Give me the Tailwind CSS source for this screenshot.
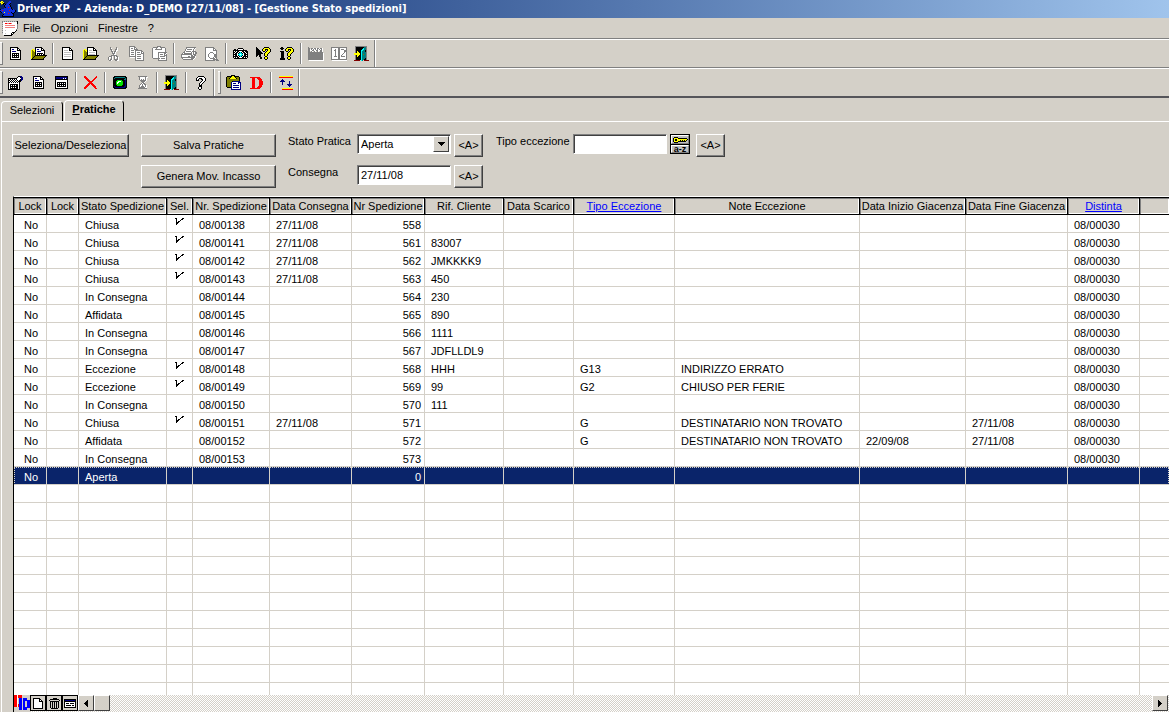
<!DOCTYPE html>
<html lang="it">
<head>
<meta charset="utf-8">
<title>Driver XP</title>
<script src="https://cdn.jsdelivr.net/npm/@tailwindcss/browser@4"></script>
</head>
<body class="flex h-screen flex-col overflow-hidden bg-[#d4d0c8] font-['Liberation_Sans',sans-serif] text-[11px] leading-4 text-black">

<header class="flex h-[18px] shrink-0 items-center gap-px bg-linear-to-r from-[#0a246a] to-[#a0c4ec] text-white">
  <i data-icon="wizard" class="block"></i>
  <h1 class="font-['DejaVu_Sans_Condensed','DejaVu_Sans',sans-serif] text-[11px] font-bold whitespace-pre">Driver XP  - Azienda: D_DEMO [27/11/08] - [Gestione Stato spedizioni]</h1>
</header>

<nav class="flex h-[21px] shrink-0 items-center border-b border-[#808080] pl-[2px]">
  <i data-icon="form" class="block"></i>
  <button class="ml-[5px]">File</button>
  <button class="ml-[10px]">Opzioni</button>
  <button class="ml-[10px]">Finestre</button>
  <button class="ml-[10px]">?</button>
</nav>

<div id="bar1" role="toolbar" class="flex h-[29px] shrink-0 items-stretch border-t border-b border-t-white border-b-[#808080]"></div>
<div id="bar2" role="toolbar" class="flex h-[30px] shrink-0 items-stretch border-t border-b-2 border-t-white border-b-[#55555a]"></div>

<div role="tablist" class="flex h-[23px] shrink-0 items-end pl-px">
  <button role="tab" class="h-[20px] w-[62px] rounded-t-[4px] border-t border-r border-l border-t-white border-r-black border-l-white pb-1">Selezioni</button>
  <button role="tab" aria-selected="true" class="mb-[-1px] ml-px h-[22px] w-[60px] rounded-t-[4px] border-t border-r border-l border-t-white border-r-black border-l-white bg-[#d4d0c8] pb-[6px] font-bold"><u>P</u>ratiche</button>
</div>

<main class="ml-px flex min-h-0 flex-1 flex-col border-t border-l border-white">
  <form class="flex shrink-0 items-start pt-3 pb-2 pl-[10px]">
    <button type="button" class="h-[23px] w-[117px] border border-t-white border-r-[#404040] border-b-[#404040] border-l-white pb-[2px] shadow-[inset_-1px_-1px_#808080]">Seleziona/Deseleziona</button>
    <div class="ml-3 flex w-[135px] flex-col gap-2">
      <button type="button" class="h-[23px] border border-t-white border-r-[#404040] border-b-[#404040] border-l-white pb-[2px] shadow-[inset_-1px_-1px_#808080]">Salva Pratiche</button>
      <button type="button" class="h-[23px] border border-t-white border-r-[#404040] border-b-[#404040] border-l-white pb-[2px] shadow-[inset_-1px_-1px_#808080]">Genera Mov. Incasso</button>
    </div>
    <div class="ml-3 grid grid-cols-[69px_94px_29px] items-start gap-y-2">
      <label for="stato" class="leading-[14px]">Stato Pratica</label>
      <div class="relative h-[20px]">
        <select id="stato" class="h-full w-full appearance-none border border-t-[#808080] border-r-white border-b-white border-l-[#808080] bg-white pl-[3px] shadow-[inset_1px_1px_#404040]"><option>Aperta</option></select>
        <span class="pointer-events-none absolute top-[2px] right-[2px] flex h-4 w-4 items-center justify-center border border-t-white border-r-[#404040] border-b-[#404040] border-l-white bg-[#d4d0c8]"><svg width="7" height="4" shape-rendering="crispEdges"><path d="M0 0h7v1H6v1H5v1H4v1H3V3H2V2H1V1H0z"/></svg></span>
      </div>
      <button type="button" class="ml-[3px] h-[23px] w-[29px] border border-t-white border-r-[#404040] border-b-[#404040] border-l-white pb-[2px] shadow-[inset_-1px_-1px_#808080]">&lt;A&gt;</button>
      <label for="consegna" class="leading-[14px]">Consegna</label>
      <input id="consegna" value="27/11/08" class="h-[20px] w-full border border-t-[#808080] border-r-white border-b-white border-l-[#808080] bg-white pl-[3px] shadow-[inset_1px_1px_#404040]">
      <button type="button" class="ml-[3px] h-[23px] w-[29px] border border-t-white border-r-[#404040] border-b-[#404040] border-l-white pb-[2px] shadow-[inset_-1px_-1px_#808080]">&lt;A&gt;</button>
    </div>
    <label for="tipo" class="ml-[16px] w-[77px] leading-[14px] whitespace-nowrap">Tipo eccezione</label>
    <input id="tipo" class="h-[20px] w-[94px] border border-t-[#808080] border-r-white border-b-white border-l-[#808080] bg-white pl-[3px] shadow-[inset_1px_1px_#404040]">
    <button type="button" aria-label="Cerca a-z" class="ml-[3px] flex h-[20px] w-[20px] flex-col gap-px border border-black bg-black">
      <span class="flex h-[9px] w-full items-center justify-center border border-t-white border-r-[#808080] border-b-[#808080] border-l-white bg-[#c0c0c0]"><i data-icon="key" class="block"></i></span>
      <span class="flex h-[8px] w-full items-center justify-center border border-t-white border-r-[#808080] border-b-[#808080] border-l-white bg-[#c0c0c0] pb-px text-[9px] leading-[6px] font-bold">a-z</span>
    </button>
    <button type="button" class="ml-[6px] h-[23px] w-[29px] border border-t-white border-r-[#404040] border-b-[#404040] border-l-white pb-[2px] shadow-[inset_-1px_-1px_#808080]">&lt;A&gt;</button>
  </form>

  <section class="ml-[11px] flex min-h-0 flex-1 flex-col border-t border-l border-t-white border-l-black bg-white">
    <div class="min-h-0 flex-1 overflow-hidden">
      <table class="w-full table-fixed border-separate border-spacing-0 whitespace-nowrap">
        <colgroup><col class="w-[33px]"><col class="w-[32px]"><col class="w-[88px]"><col class="w-[26px]"><col class="w-[77px]"><col class="w-[82px]"><col class="w-[73px]"><col class="w-[79px]"><col class="w-[70px]"><col class="w-[101px]"><col class="w-[185px]"><col class="w-[106px]"><col class="w-[102px]"><col class="w-[72px]"><col></colgroup>
        <thead><tr id="head"></tr></thead>
        <tbody id="rows"></tbody>
      </table>
    </div>
    <footer class="flex h-[17px] shrink-0 bg-[repeating-conic-gradient(#fff_0_25%,#d4d0c8_0_50%)] bg-[length:2px_2px]">
      <svg width="16" height="17" shape-rendering="crispEdges"><path fill="#d4d0c8" d="M0 0h16v17H0z"/><path fill="red" fill-rule="evenodd" d="M0 0h3v12H0zM3 0h5v12H3zM4 3v6h2V3z"/><path fill="#fff" d="M3 0h1v12H3z"/><path fill="#00f" fill-rule="evenodd" d="M5 3h3v12H5zM9 3h4v2h3v8h-3v2H9zM11 6v6h2V6z"/></svg>
      <button aria-label="Nuovo" class="flex h-4 w-4 items-center justify-center border border-black bg-[#d4d0c8]"><i data-icon="page" class="block"></i></button>
      <button aria-label="Elimina" class="flex h-4 w-4 items-center justify-center border border-black bg-[#d4d0c8]"><i data-icon="bin" class="block"></i></button>
      <button aria-label="Scheda" class="flex h-4 w-4 items-center justify-center border border-black bg-[#d4d0c8]"><i data-icon="card" class="block"></i></button>
      <button aria-label="Scorri a sinistra" class="flex h-4 w-4 items-center justify-center border border-t-white border-r-[#404040] border-b-[#404040] border-l-white bg-[#d4d0c8]"><svg width="4" height="7" shape-rendering="crispEdges"><path d="M4 0v7H3V6H2V5H1V4H0V3h1V2h1V1h1V0z"/></svg></button>
      <span class="h-4 w-4 border border-t-white border-r-[#404040] border-b-[#404040] border-l-white bg-[#d4d0c8]"></span>
      <button aria-label="Scorri a destra" class="mr-px ml-auto flex h-4 w-4 items-center justify-center border border-t-white border-r-[#404040] border-b-[#404040] border-l-white bg-[#d4d0c8]"><svg width="4" height="7" shape-rendering="crispEdges"><path d="M0 0v7h1V6h1V5h1V4h1V3H3V2H2V1H1V0z"/></svg></button>
    </footer>
  </section>
</main>

<script>
// Pixel icons: one character per pixel.
const colours = {k:'#000',w:'#fff',g:'#808080',y:'#ff0',o:'#808000',b:'#000080',r:'#f00',t:'#008080',c:'#0ff',B:'#1030e0',l:'#c0c0c0',G:'#00e000',d:'#800000',p:'#f08080'};
const icons = {
wizard:`
.yy......BB.....
yyoy....BBB.....
.yykk..BBBk.....
.o.kBkBBBk......
....kBBBBBk.....
....kBBBBBk.....
.....kBBrBBk....
....BBBBBBBk....
kBBBBBBBBBBBkB..
BBrBBBBBBrBBBBBk
kBBBBBBBBBBBBBBk
.kBByBBBBBBkBBk.
...BBBBBrBBBkk..
...kBBBBBBBBBk..
..kBBBBBBBBBBk..
..kkkkkkkkkkkk..`,
form:`
glglglglglglglgk
gwwwwwwwwwwwwwwk
lwwrrpprrpwwwwwk
gwwwwwwwwwwwwwwg
lwwppppppppppwwg
gwwwwwwwwwwwwwwg
lwwppppppppppwwg
gwwwwwwwwwwwwwwg
lwwwwwwwwwwwwwg.
gwwlwwwwwwwwwwk.
lwwwwwwwwwwwwk..
gwwwwwwwwwkkk...
lwwlwwwwwkwk....
.wwwwwwwwkk.....
..kkkkkkkk......`,
doc:`
kkkkkkkk....
kwwwwwwkk...
kwbbwwwkwk..
kwwwwwwkkkk.
kwbbbbwwwwk.
kwwwwwwwwwk.
kwkkkkkkkwk.
kwkwkwkwkwk.
kwkkkkkkkwk.
kwkwkwkwkwk.
kwkkkkkkkwk.
kwwwwwwwwwk.
kkkkkkkkkkk.`,
folderdoc:`
....kkkkkkk.....
....kwwwwwkk....
.yy.kwbbwwkwk...
yoyykwwwwwkkkk..
yooykwbbbbwwwk..
yoookwwwwwwwwk..
yoookwkkkkkkwk..
yoookwkwkwkwkk..
yoookkkkkkkkkkkk
yookooooooooook.
yokooooooooook..
ykooooooooook...
kkkkkkkkkkkkk...`,
page:`
kkkkkkk....
kwwwwwkk...
kwwwwwkwk..
kwwwwwkkkk.
kwwwwwwwwk.
kwwwwwwwwk.
kwwwwwwwwk.
kwwwwwwwwk.
kwwwwwwwwk.
kwwwwwwwwk.
kkkkkkkkkk.`,
newdoc:`
kkkkkkkk...
kwwwwwwkk..
kwwwwwwkwk.
kwllllwkkkk
kwwwwwwwwwk
kwlllllllwk
kwwwwwwwwwk
kwlllllllwk
kwwwwwwwwwk
kwlllllllwk
kwwwwwwwwwk
kwwwwwwwwwk
kkkkkkkkkkk`,
folder:`
....kkkkkkk.....
....kwwwwwkk....
.yy.kwwwwwkwk...
yoyykwlllwkkkk..
yooykwwwwwwwwk..
yoookwllllllwk..
yoookwwwwwwwwk..
yoookwllllllwk..
yoookkkkkkkkkkkk
yookooooooooook.
yokooooooooook..
ykooooooooook...
kkkkkkkkkkkkk...`,
cut:`
..g.....g..
..gw....gw.
..gg...ggw.
...gw..gww.
...gg.ggw..
....gwgw...
....gggw...
.....gww...
...gggggg..
.gggw.gwgg.
gwwgw.gwwgw
gw.gw.gw.gw
gwggw.ggggw
.ggw...ggww`,
copy:`
gggggg.........
gwwwwgg........
gwggwgwg.......
gwwwwgggg......
gwgggwggggggg..
gwwwwwgwwwwwgg.
gwgggwgwgggwgwg
gwwwwwgwwwwwggg
gwgggwgwggggwwg
gwwwwwgwwwwwwwg
gggggggwggggwwg
.wwwwwgwwwwwwwg
......gwggggwwg
......gwwwwwwwg
......ggggggggg`,
paste:`
.....gggg......
.gggggwwggggg..
gwwwgwwwwgwwwg.
gwwgggggggwwwg.
gwwwwwwwwwwwwg.
gwwwwwwwwwwwwg.
gwwwwwggggggggg
gwwwwwgwwwwwggw
gwwwwwgwgggwgwg
gwwwwwgwwwwwggg
gwwwwwgwgggggwg
gwwwwwgwwwwwwwg
.gggggggwggggwg
......gwwwwwwwg
......ggggggggg`,
print:`
.....gggggggggg.
.....gwwwwwwwgw.
....gwgggggwgw..
....gwwwwwwwgw..
...gwgggggwgggg.
..ggwwwwwwgwgwgg
.gwggggggggwgwgg
gggggggggggwggg.
gwwwwwwwwwggwgg.
gwwwwwwggwggggw.
ggggggggggggggw.
.gwwwwwwwwgggw..
..ggggggggggw...`,
preview:`
ggggggggg.....
gwwwwwwwgg....
gwwwwwwwgwg...
gwwwwwwwgggg..
gwwwwwwwwwwg..
gwwwwgggwwwg..
gwwwgwwwgwwg..
gwwgwwwwwggg..
gwwgwwwwwggg..
gwwgwwwwwggg..
gwwwgwwwgwgg..
gwwwwgggggwg..
gwwwwwwwggggg.
gggggggggg.ggg`,
camera:`
.....kkkkk.....
.kk.kwwwwwk....
kkkkkkkkkkkkkk.
kwkwkkwwwkkwkkk
kkwkkwkckwkkwkk
kwkkwkccckwkkwk
kkkkwccwccwkkkk
kwkkwkccckwkkwk
kkkkkwkckwkkkkk
kwkwkkwwwkkwkwk
.kkkkkkkkkkkkk.`,
help:`
k.......kkkkk..
kk.....kyyyyyk.
kkk...kyykkkyyk
kkkk..kyyk.kyyk
kkkkk..kk.kyyyk
kkkkkk...kyyyk.
kkkkkkk.kyyyk..
kkkkk...kyyk...
kk.kk...kyyk...
k..kk....kk....
....kk..kyyk...
....kk..kyyk...
.........kk....`,
info:`
..kk....kkkkk..
.kkkk..kyyyyyk.
..kk..kyykkkyyk
......kyyk.kyyk
.kkkk..kk.kyyyk
..kkk....kyyyk.
..kkk...kyyyk..
..kkk...kyyk...
..kkk...kyyk...
..kkk....kk....
..kkk...kyyk...
.kkkkk..kyyk...
.kkkkk...kk....`,
factory:`
g...............
gg.ggwggwggwggw.
ggwgwgwgwgwgwgw.
ggwwggwwggwwggw.
gg.gw.gw.gw.ggw.
ggggggggggggggg.
gggggggggggggggw
gggggggggggggggw
gggggggggggggggw
gggggggggggggggw
gggggggggggggggw
gggggggggggggggw
gggggggggggggggw
.wwwwwwwwwwwwwww`,
cols:`
gggggggggggggggg
gwwwwwwggwwwwwwg
gwwwgwwggwgggwwg
gwwggwwggwwwwggg
gwwwgwwggwwwwggg
gwwwgwwggwwwwgwg
gwwwgwwggwwwgwwg
gwwwgwwggwwgwwwg
gwwwgwwggwgwwwwg
gwwgggwggwggggwg
gwwwwwwggwwwwwwg
gwwwwwwggwwwwwwg
gggggggggggggggg
.wwwwwwwwwwwwwww`,
exit:`
.gggggggggggg..
.gkkkkkkkkttg..
.gkkkkkkkcttg..
.gkkkkkkccttg..
.gkkkkkccttkg..
.gkykkkctttkg..
.gkyykkcttttg..
yyyyyykcttttg..
yyyyyykctottg..
.gkyykkcttttg..
.gkykkkcttttg..
.gkkkkkcttttg..
.gkkkkkctttkg..
.gkkkkkcttkkg..
dddddd.ct.ddddd`,
handdoc:`
..........kkbb.
.........kwwkbb
kkkkkkkkkwwwwbb
kwkwkwkwkwwwkbb
kkwkwkwkwkwkkb.
kwkwkwkwkwkkk..
kkwkwkwkwkwk...
kwwwwwwwwwwk...
kwkkkkkkkkwk...
kwkwkwkwkkwk...
kwkkkkkkkkwk...
kwkwkwkwkkwk...
kwkkkkkkkkwk...
kkkkkkkkkkkk...`,
window:`
kkkkkkkkkkkkk
kbbbbbbbbbbbk
kbbbbbbbwbwbk
kkkkkkkkkkkkk
kwwwwwwwwwwwk
kwwwwwwwwwwwk
kwkkkkkkkkkwk
kwkwkwkwkwkwk
kwkkkkkkkkkwk
kwkwkwkwkwkwk
kwkkkkkkkkkwk
kwwwwwwwwwwwk
kkkkkkkkkkkkk`,
cross:`
rr..........r.
rrr........rr.
.rrr......rr..
..rrr....rr...
...rrr..rr....
....rrrrr.....
.....rrr......
....rrrrr.....
...rrr.rrr....
..rrr...rrr...
.rrr.....rrr..
rrr.......rr..
rr.........rr.`,
light:`
.kkkkkkkkkkkk.
kkttttttttttkk
ktkkkkkkkkkktk
kkkkkkkkkkkttk
kkkkGGGGGkkkbk
kkkGGwwwGGkkbk
kkkGwwGGGGkkbk
kkkGwGGGGGkkbk
kkkGGGGGGGkkbk
kkkkGGGGGkkkbk
kbkkkkkkkkkbbk
kkbbbbbbbbbbkk
.kkkkkkkkkkkk.`,
hourglass:`
ggggggggg.
.gwwwwwgww
.gwwwwwgw.
.gwgwgwgw.
..ggggggw.
...ggggw..
....ggw...
...gwgg...
..gwgwgg..
.gwwgwwgw.
.gwgggwgw.
.ggggggww.
ggggggggg.`,
question:`
..kkkkkk..
.kwwwwwwk.
kwwkkkwwwk
kwk..kkwwk
kkk...kwwk
.....kwwk.
....kwwk..
...kwwk...
...kwk....
...kkk....
...kkk....
..kwwk....
..kwwk....
...kk.....`,
clip:`
.....kkkk......
.kkkkkyykkkkk..
koookyyyykoook.
kookyyyyyykook.
kooooooooooook.
kooooooooooook.
koooookbbbbbbb.
koooobwwwwwwbbb
koooobwbbbwwbwb
koooobwwwwwwwwb
koooobwbbbbbbwb
koooobwwwwwwwwb
.kkkkbwbbbbbbwb
.....bwwwwwwwwb
.....bbbbbbbbbb`,
dee:`
rrrrrrrrrr...
..rrr..rrrr..
..rrr...rrrr.
..rrr....rrr.
..rrr....rrrr
..rrr....rrrr
..rrr....rrrr
..rrr....rrrr
..rrr....rrr.
..rrr...rrrr.
..rrr..rrrr..
rrrrrrrrrr...`,
sort:`
yyyyyyyyyyyyyy
rrrrrrrrrrrrrr
..............
...b..........
..bbb.........
.bbbbb....b...
...b......b...
...b......b...
...b....bbbbb.
.........bbb..
..........b...
..............
...yyyyyyyyyyy
...rrrrrrrrrrr`,
bin:`
....kkkk...
.kkkkkkkkk.
k.........k
.kkkkkkkkk.
.k.k.k.k.k.
.k.k.k.k.k.
.k.k.k.k.k.
.k.k.k.k.k.
.k.k.k.k.k.
.k.k.k.k.k.
..kkkkkkk..`,
card:`
kkkkkkkkkkkk
kbbbbbbbbbbk
kkkkkkkkkkkk
kwwwwwwwwwwk
kwkkkwkkkkwk
kwwwwwwwwwwk
kwkkkkkwkkwk
kwwwwwwwwwwk
kkkkkkkkkkkk`,
key:`
.kkkk..........
kyyyykkkkkkkkk.
kykkyyyyyyyyyyk
kykkyyykykykyk.
kyyyykkkkkkkk..
.kkkk..........`,
tick:`
kk.....kk
.k....kk.
.k...k...
.k.kk....
.kkk.....
.kk......
.k.......`
};
function icon(name) {
  const lines = icons[name].trim().split('\n');
  const w = Math.max(...lines.map(l => l.length));
  let out = '';
  lines.forEach((line, y) => {
    for (const m of line.matchAll(/([a-zA-Z])\1*/g))
      out += `<rect x="${m.index}" y="${y}" width="${m[0].length}" height="1" fill="${colours[m[1]]}"/>`;
  });
  return `<svg class="shrink-0" width="${w}" height="${lines.length}" shape-rendering="crispEdges" aria-hidden="true">${out}</svg>`;
}
document.querySelectorAll('[data-icon]').forEach(e => e.innerHTML = icon(e.dataset.icon));

// Toolbars: "|" separator, "[" grip, "]" end of a band.
function toolbar(id, items) {
  document.getElementById(id).innerHTML = items.split(' ').map(n =>
    n === '|' ? '<span class="my-[3px] mr-[2px] ml-[2px] w-[2px] border-l border-r border-l-[#808080] border-r-white"></span>' :
    n === '[' ? '<span class="my-[2px] mr-px w-[3px] border-t border-r border-b border-t-white border-r-[#808080] border-b-[#808080] bg-[#eeece8]"></span>' :
    n === ']' ? '<span class="mr-[3px] ml-px w-[2px] border-l border-r border-l-[#808080] border-r-white"></span>' :
    `<button aria-label="${n}" class="flex w-[23px] items-center justify-center">${icon(n)}</button>`).join('');
}
toolbar('bar1', '[ doc folderdoc | newdoc folder cut copy paste | print preview | camera help info | factory cols exit ]');
toolbar('bar2', '[ handdoc doc window | cross | light hourglass | exit | question ] [ clip dee | sort ]');

const heads = ['Lock','Lock','Stato Spedizione','Sel.','Nr. Spedizione','Data Consegna','Nr Spedizione','Rif. Cliente','Data Scarico','Tipo Eccezione','Note Eccezione','Data Inizio Giacenza','Data Fine Giacenza','Distinta',''];
document.getElementById('head').innerHTML = heads.map(h =>
  `<th class="h-[18px] border-t border-r border-b border-black bg-[#d4d0c8] p-0 font-normal shadow-[inset_1px_1px_#808080,inset_-1px_-1px_#fff] last:border-r-0">${h === 'Tipo Eccezione' || h === 'Distinta' ? `<a href="#" class="text-[#0000ff] underline">${h}</a>` : h}</th>`).join('');

// stato, sel, nr, consegna, nr sped, rif, tipo, note, inizio, fine
const data = `Chiusa,v,08/00138,27/11/08,558,,,,,
Chiusa,v,08/00141,27/11/08,561,83007,,,,
Chiusa,v,08/00142,27/11/08,562,JMKKKK9,,,,
Chiusa,v,08/00143,27/11/08,563,450,,,,
In Consegna,,08/00144,,564,230,,,,
Affidata,,08/00145,,565,890,,,,
In Consegna,,08/00146,,566,1111,,,,
In Consegna,,08/00147,,567,JDFLLDL9,,,,
Eccezione,v,08/00148,,568,HHH,G13,INDIRIZZO ERRATO,,
Eccezione,v,08/00149,,569,99,G2,CHIUSO PER FERIE,,
In Consegna,,08/00150,,570,111,,,,
Chiusa,v,08/00151,27/11/08,571,,G,DESTINATARIO NON TROVATO,,27/11/08
Affidata,,08/00152,,572,,G,DESTINATARIO NON TROVATO,22/09/08,27/11/08
In Consegna,,08/00153,,573,,,,,
Aperta,,,,0,,,,,`.split('\n').map(l => l.split(','));
let html = '';
for (let i = 0; i < 27; i++) {
  const d = data[i], selected = i === 14;
  const cells = d ? ['No','',d[0],d[1] ? icon('tick') : '',d[2],d[3],d[4],d[5],'',d[6],d[7],d[8],d[9],selected ? '' : '08/00030',''] : Array(15).fill('');
  html += `<tr class="${selected ? 'bg-[#0a246a] text-white outline outline-dotted outline-[#d4d0c8] -outline-offset-1' : ''}">` + cells.map((c, n) =>
    `<td class="h-[18px] border-r border-b border-[#d4d0c8] pb-0 leading-[14px] last:border-r-0 ${n === 3 ? 'pt-0 pb-1 pl-[8px]' : n === 0 ? 'pt-[3px] pl-[10px]' : n === 6 ? 'pt-[3px] pr-[3px] text-right' : 'pt-[3px] pl-[6px]'}">${c}</td>`).join('') + '</tr>';
}
document.getElementById('rows').innerHTML = html;
</script>
</body>
</html>
